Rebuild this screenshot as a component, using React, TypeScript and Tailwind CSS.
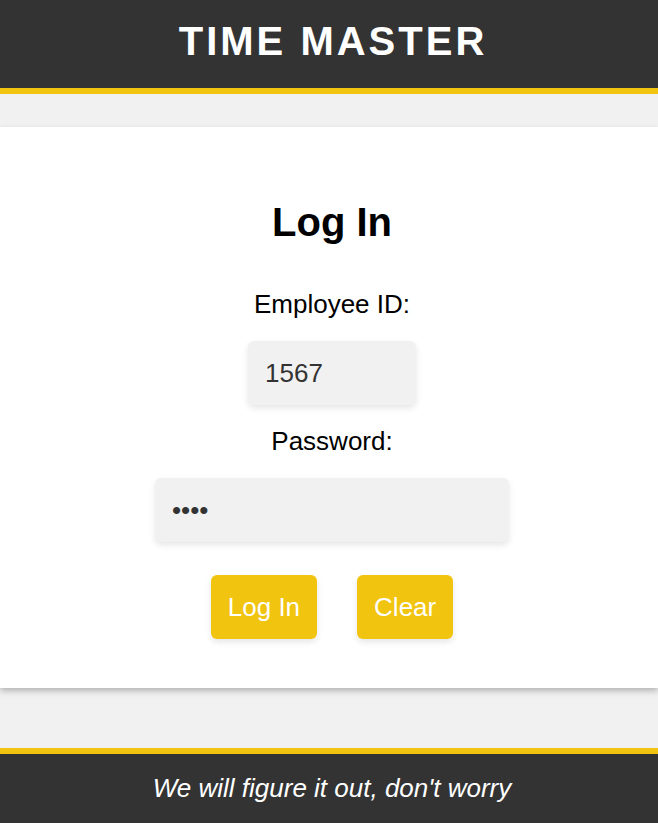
import React, { useState } from "react";

const fieldClass =
  "mt-[21px] h-16 rounded-md bg-[#f1f1f1] px-[17px] text-[26px] text-[#333] shadow-[0_3px_6px_rgba(0,0,0,0.1)] outline-none";
const buttonClass =
  "h-16 rounded-md bg-[#f1c40f] px-[17px] text-[26px] text-white shadow-[0_3px_6px_rgba(0,0,0,0.1)]";

export default function App() {
  const [employeeId, setEmployeeId] = useState("1567");
  const [password, setPassword] = useState("1234");

  const clear = () => {
    setEmployeeId("");
    setPassword("");
  };

  return (
    <div className="flex min-h-screen flex-col bg-[#f1f1f1] font-['Liberation_Sans',Arial,sans-serif] text-black">
      <header className="border-b-6 border-[#f1c40f] bg-[#333] pt-[17px] pb-[23px] pl-2 text-center text-white">
        <h1 className="text-[40px] leading-12 font-bold tracking-[3px]">TIME MASTER</h1>
      </header>

      <main className="mt-[33px] bg-white pt-[71px] pb-[49px] pl-1.5 shadow-[0_3px_6px_rgba(0,0,0,0.25)]">
        <form className="flex flex-col items-center" onSubmit={(e) => e.preventDefault()}>
          <h2 className="text-[40px] leading-12 font-bold">Log In</h2>
          <label htmlFor="employee-id" className="mt-[42px] text-[26px] leading-8">
            Employee ID:
          </label>
          <input
            id="employee-id"
            type="text"
            value={employeeId}
            onChange={(e) => setEmployeeId(e.target.value)}
            className={`${fieldClass} w-[168px]`}
          />
          <label htmlFor="password" className="mt-5 text-[26px] leading-8">
            Password:
          </label>
          <input
            id="password"
            type="password"
            value={password}
            onChange={(e) => setPassword(e.target.value)}
            className={`${fieldClass} w-[354px]`}
          />
          <div className="mt-[33px] flex gap-10">
            <button type="submit" className={buttonClass}>
              Log In
            </button>
            <button type="button" onClick={clear} className={buttonClass}>
              Clear
            </button>
          </div>
        </form>
      </main>

      <footer className="mt-auto border-t-6 border-[#f1c40f] bg-[#333] py-[18px] pl-1.5 text-center text-white">
        <p className="text-[26px] leading-[33px] italic">We will figure it out, don't worry</p>
      </footer>
    </div>
  );
}
